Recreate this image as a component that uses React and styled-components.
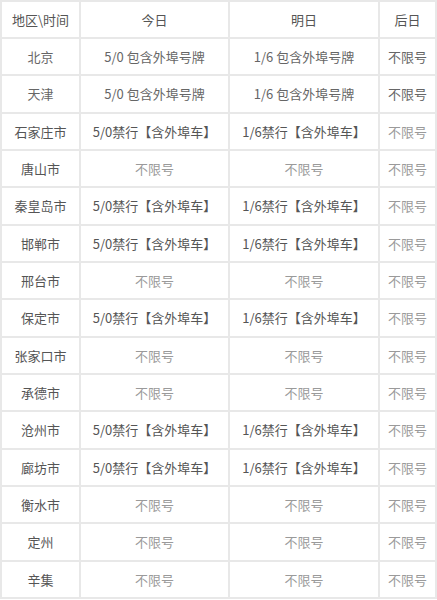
import React from "react";
import styled, { createGlobalStyle } from "styled-components";

const GlobalStyle = createGlobalStyle`
  html, body {
    margin: 0;
    padding: 0;
    background: #fff;
  }
  body {
    font-family: "Noto Sans CJK SC", "Noto Sans", sans-serif;
  }
`;

const FREE = "不限号";

const rows = [
  { city: "北京", today: "5/0 包含外埠号牌", tomorrow: "1/6 包含外埠号牌", after: FREE, soft: true },
  { city: "天津", today: "5/0 包含外埠号牌", tomorrow: "1/6 包含外埠号牌", after: FREE, soft: true },
  { city: "石家庄市", today: "5/0禁行【含外埠车】", tomorrow: "1/6禁行【含外埠车】", after: FREE },
  { city: "唐山市", today: FREE, tomorrow: FREE, after: FREE },
  { city: "秦皇岛市", today: "5/0禁行【含外埠车】", tomorrow: "1/6禁行【含外埠车】", after: FREE },
  { city: "邯郸市", today: "5/0禁行【含外埠车】", tomorrow: "1/6禁行【含外埠车】", after: FREE },
  { city: "邢台市", today: FREE, tomorrow: FREE, after: FREE },
  { city: "保定市", today: "5/0禁行【含外埠车】", tomorrow: "1/6禁行【含外埠车】", after: FREE },
  { city: "张家口市", today: FREE, tomorrow: FREE, after: FREE },
  { city: "承德市", today: FREE, tomorrow: FREE, after: FREE },
  { city: "沧州市", today: "5/0禁行【含外埠车】", tomorrow: "1/6禁行【含外埠车】", after: FREE },
  { city: "廊坊市", today: "5/0禁行【含外埠车】", tomorrow: "1/6禁行【含外埠车】", after: FREE },
  { city: "衡水市", today: FREE, tomorrow: FREE, after: FREE },
  { city: "定州", today: FREE, tomorrow: FREE, after: FREE },
  { city: "辛集", today: FREE, tomorrow: FREE, after: FREE },
];

const Table = styled.table`
  width: 437px;
  table-layout: fixed;
  border-collapse: collapse;
  border: 2px solid #dcdcdc;
  font-size: 13px;
`;

const HeadRow = styled.tr`
  height: 37px;
`;

const Row = styled.tr`
  height: 37.33px;
`;

const Cell = styled.td`
  padding: 0;
  text-align: center;
  vertical-align: middle;
  white-space: nowrap;
  border: 2px solid #e8e8e8;
  color: ${({ $tone }) =>
    $tone === "free" ? "#9a9a9a" : $tone === "soft" ? "#666" : "#555"};
`;

const HeadCell = styled.th`
  padding: 0;
  font-weight: normal;
  text-align: center;
  vertical-align: middle;
  white-space: nowrap;
  border: 2px solid #e8e8e8;
  color: #555;
`;

const toneOf = (text, soft) => (text === FREE ? (soft ? "soft" : "free") : soft ? "soft" : "plain");

export default function App() {
  return (
    <>
      <GlobalStyle />
      <Table>
        <colgroup>
          <col style={{ width: 79 }} />
          <col style={{ width: 149 }} />
          <col style={{ width: 150 }} />
          <col />
        </colgroup>
        <thead>
          <HeadRow>
            <HeadCell>地区\时间</HeadCell>
            <HeadCell>今日</HeadCell>
            <HeadCell>明日</HeadCell>
            <HeadCell>后日</HeadCell>
          </HeadRow>
        </thead>
        <tbody>
          {rows.map((r) => (
            <Row key={r.city}>
              <Cell $tone={r.soft ? "soft" : "plain"}>{r.city}</Cell>
              <Cell $tone={toneOf(r.today, r.soft)}>{r.today}</Cell>
              <Cell $tone={toneOf(r.tomorrow, r.soft)}>{r.tomorrow}</Cell>
              <Cell $tone={toneOf(r.after, r.soft)}>{r.after}</Cell>
            </Row>
          ))}
        </tbody>
      </Table>
    </>
  );
}
